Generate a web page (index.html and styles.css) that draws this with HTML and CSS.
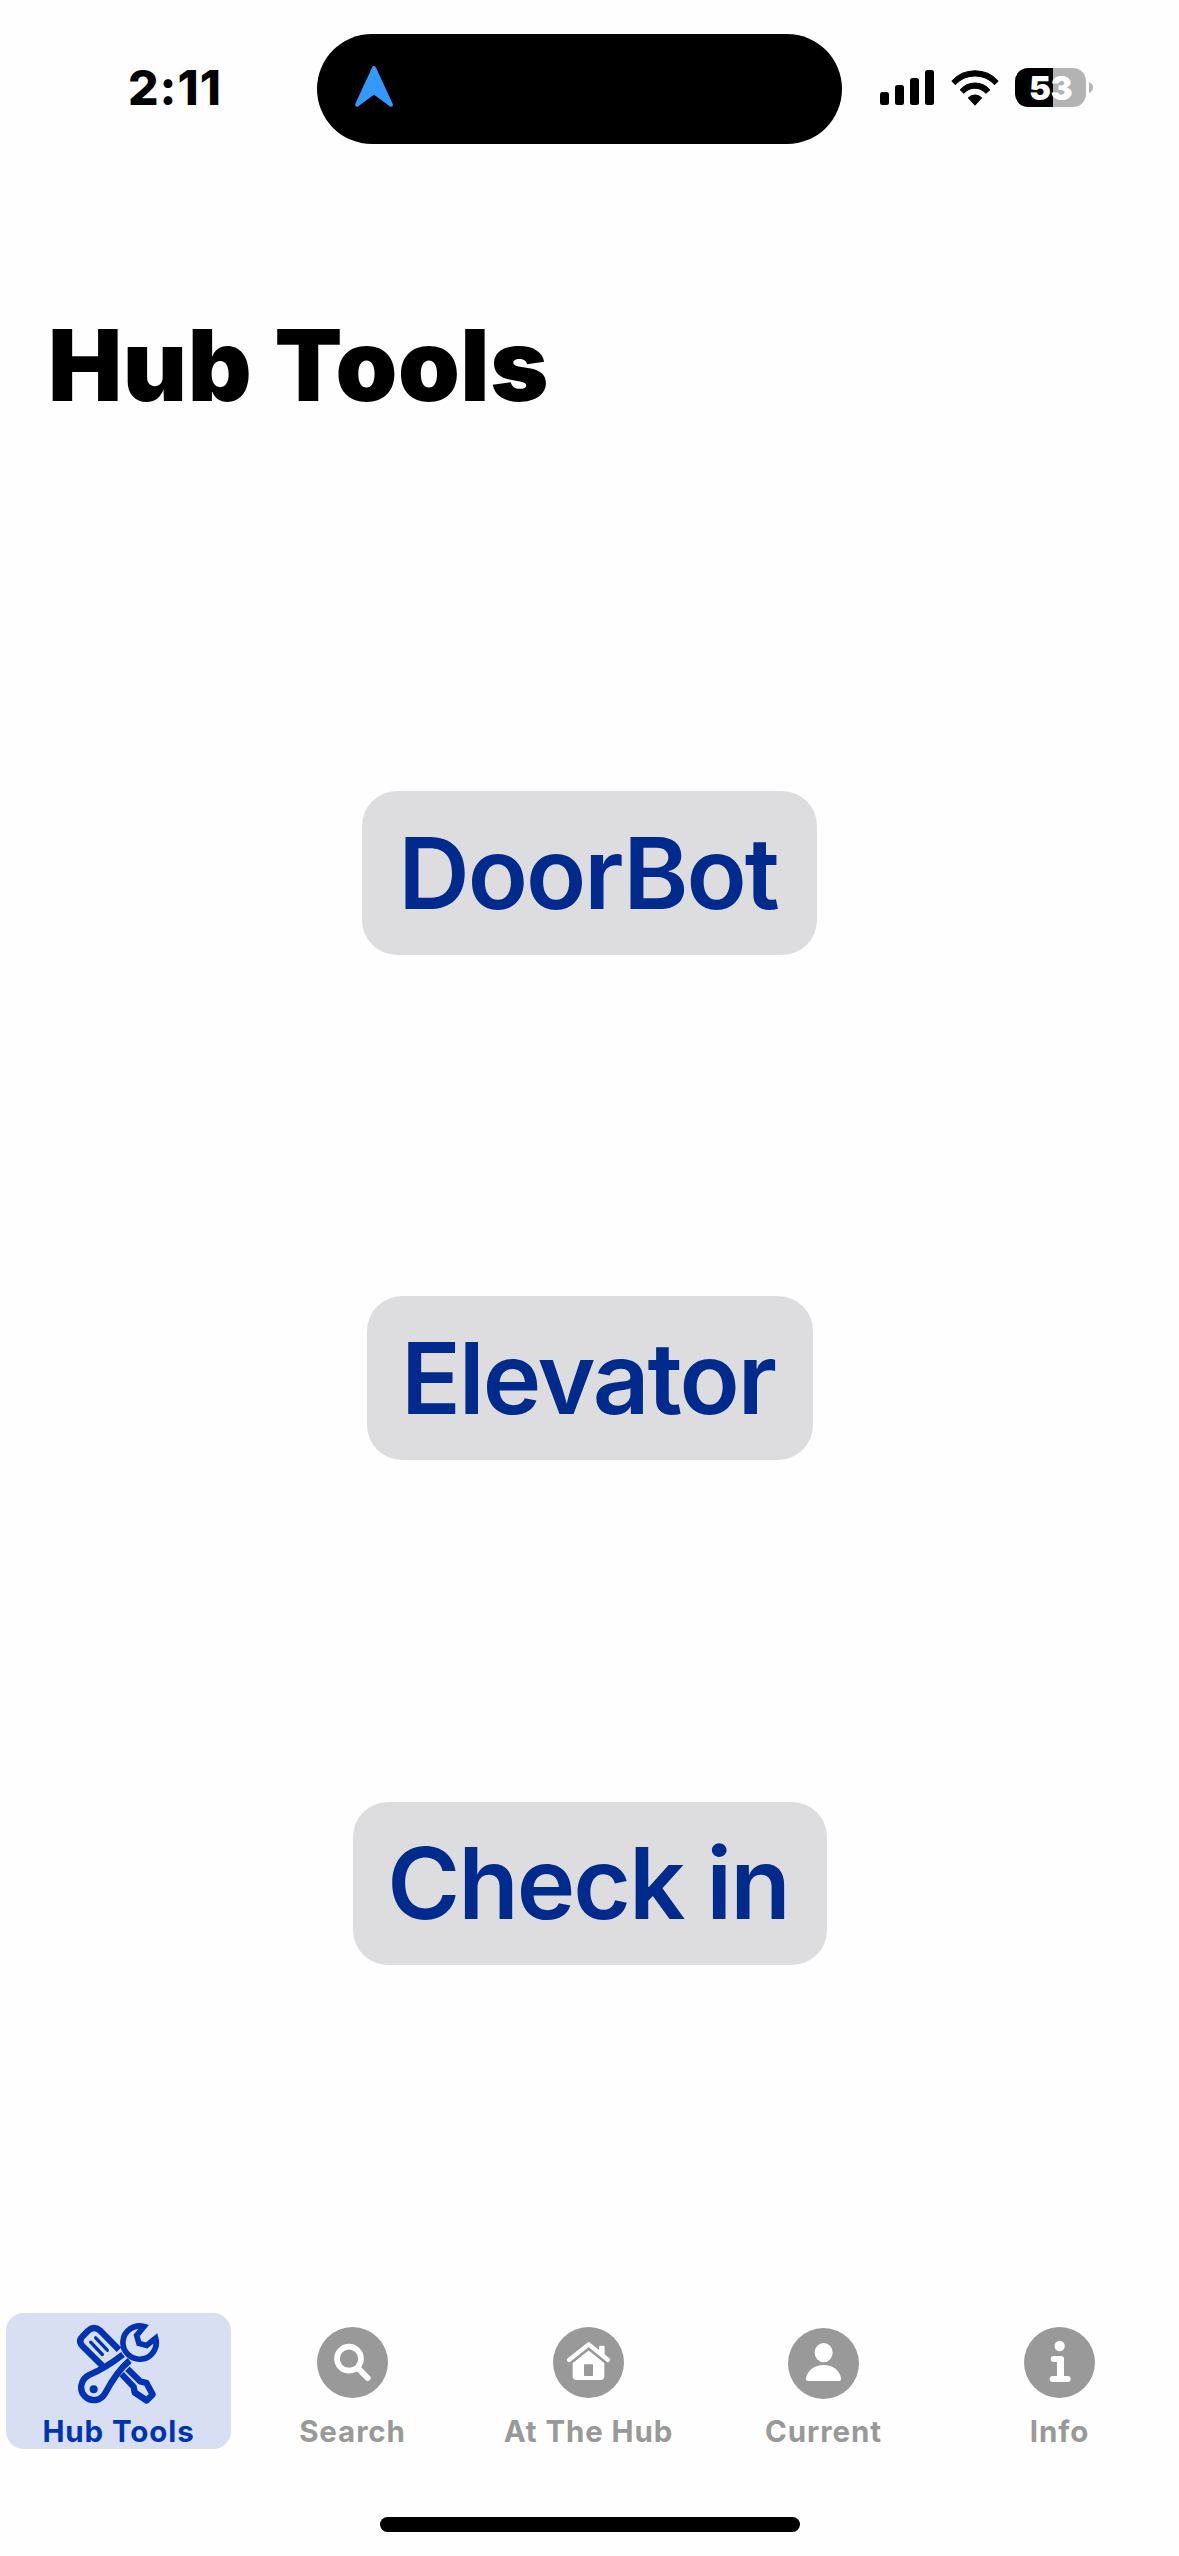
FILE: index.html
```html
<!DOCTYPE html>
<html lang="en">
<head>
<meta charset="utf-8">
<title>Hub Tools</title>
<link rel="stylesheet" href="styles.css">
</head>
<body>
<div class="screen">
  <header class="status">
    <span class="time">2:11</span>
    <div class="island">
      <svg class="nav-arrow" viewBox="0 0 114 124"><path d="M57 6 L108 117 L57 79 L6 117 Z" fill="#3399ff" stroke="#3399ff" stroke-width="12" stroke-linejoin="round"/></svg>
    </div>
    <svg class="signal" viewBox="0 0 54 35"><rect y="22" width="9" height="13" rx="2.5"/><rect x="15" y="15" width="9" height="20" rx="2.5"/><rect x="30" y="8" width="9" height="27" rx="2.5"/><rect x="45" width="9" height="35" rx="2.5"/></svg>
    <svg class="wifi" viewBox="512 149 143 107" stroke="#000" stroke-width="3" stroke-linejoin="round">
      <path d="M515 182A92 92 0 0 1 652 182L642 192A81 81 0 0 0 525 192Z"/>
      <path d="M540 208A57 57 0 0 1 627 208L616 218A44 44 0 0 0 550 218Z"/>
      <path d="M564 232A27 27 0 0 1 603 232L583.500 253Z"/>
    </svg>
    <div class="battery">53</div>
    <svg class="nub" viewBox="0 0 4 11"><path d="M0 0Q4 2 4 5.500T0 11Z" fill="#b3b3b3"/></svg>
  </header>

  <h1 class="title">Hub Tools</h1>

  <main class="actions">
    <button class="action action-door">DoorBot</button>
    <button class="action action-elevator">Elevator</button>
    <button class="action action-check">Check in</button>
  </main>

  <nav class="tabs">
    <a class="tab tab-active">
      <svg class="tools" viewBox="228 66 252 248" fill="none" stroke="#0033b4" stroke-width="19" stroke-linejoin="round">
        <path d="M304 197L245 138Q230 123 245 108L262 91Q279 76 297 91L354 149"/>
        <path d="M269 126L304 163M284 113L319 150" stroke-width="10" stroke-linecap="round"/>
        <path d="M362 222L398 260L401 277L437 301L455 283L436 248L418 244L379 206"/>
        <path d="M366 163C340 183 300 210 265 224C238 237 233 271 252 289C271 307 300 302 312 280C327 252 350 210 386 181"/>
        <path d="M429 79L407 106L414 130L437 136L464 114A50 50 0 1 1 429 79Z" stroke-width="17" stroke-linejoin="miter" stroke-miterlimit="2"/>
        <circle cx="278" cy="267" r="12" fill="#0033b4" stroke="none"/>
      </svg>
      <span class="label">Hub Tools</span>
    </a>
    <a class="tab">
      <svg class="disc" viewBox="0 0 213 213"><circle cx="106.500" cy="106.500" r="106.500"/><circle cx="96" cy="95" r="36" stroke="#fff" stroke-width="17"/><path d="M124 125L152 153" stroke="#fff" stroke-width="18" stroke-linecap="round"/></svg>
      <span class="label">Search</span>
    </a>
    <a class="tab">
      <svg class="disc" viewBox="0 0 213 213"><circle cx="106.500" cy="106.500" r="106.500"/><path d="M138 80V60Q138 56 142 56H151Q155 56 155 60V90Z" fill="#fff"/><path d="M48 99L107 52L165 99" fill="none" stroke="#fff" stroke-width="13" stroke-linecap="round" stroke-linejoin="round"/><path d="M107 70L154 108V148Q154 159 143 159H70Q59 159 59 148V108Z" fill="#fff"/><path d="M57 106L107 66L157 106" fill="none" stroke="#999" stroke-width="5"/><rect x="93" y="112" width="27" height="35" rx="2"/></svg>
      <span class="label">At The Hub</span>
    </a>
    <a class="tab">
      <svg class="disc disc-low" viewBox="0 0 213 213"><circle cx="106.500" cy="106.500" r="106.500"/><ellipse cx="107" cy="74" rx="27" ry="29" fill="#fff"/><path d="M60 159Q53 159 54 151C59 126 80 111 107 111S155 126 159 151Q160 159 153 159Z" fill="#fff"/></svg>
      <span class="label">Current</span>
    </a>
    <a class="tab">
      <svg class="disc" viewBox="0 0 213 213"><circle cx="106.500" cy="106.500" r="106.500"/><circle cx="107" cy="57" r="15.500" fill="#fff"/><path d="M89 87H112Q120 87 120 95V147H131A9 9 0 0 1 131 165H86A9 9 0 0 1 86 147H99V105H89A9 9 0 0 1 89 87Z" fill="#fff"/></svg>
      <span class="label">Info</span>
    </a>
  </nav>
  <div class="home-bar"></div>
</div>
</body>
</html>
```
FILE: styles.css
```css
* { box-sizing: border-box; }
body { margin: 0; background: #fefefe; font-family: Inter, "Liberation Sans", sans-serif; }
.screen { width: 1179px; height: 2556px; overflow: hidden; display: flex; flex-direction: column; }

.status { height: 144px; padding-top: 34px; display: flex; align-items: flex-start; }
.time { width: 189px; margin: 25px 0 0 128px; font-size: 48px; line-height: 57px; font-weight: 800; letter-spacing: 1px; white-space: nowrap; }
.island { width: 525px; height: 110px; border-radius: 55px; background: #000; padding: 32px 0 0 38px; }
.nav-arrow { display: block; width: 38px; height: 41px; }
.signal { width: 54px; height: 35px; margin: 36px 0 0 38px; }
.wifi { width: 48px; height: 36px; margin: 35.500px 0 0 17px; }
.battery { width: 71px; height: 39px; margin: 34px 0 0 16px; border-radius: 13px; background: linear-gradient(90deg, #000 38px, #b3b3b3 38px); color: #fff; font-size: 33px; line-height: 40px; font-weight: 900; letter-spacing: -0.500px; text-align: center; }
.nub { width: 4px; height: 11px; margin: 48px 0 0 3px; }

.title { margin: 161px 0 0 48px; font-size: 99px; line-height: 120px; font-weight: 900; letter-spacing: 0.600px; word-spacing: 2px; color: #000; white-space: nowrap; }

.actions { flex: 1; display: flex; flex-direction: column; align-items: center; gap: 341px; padding-top: 366px; }
.action { height: 164px; border: 0; padding: 0 3px 0 0; border-radius: 35px; background: #dddde0; color: #002a8c; font-family: inherit; font-size: 99px; line-height: 164px; font-weight: 600; letter-spacing: -2px; white-space: nowrap; }
.action-door { width: 455px; }
.action-elevator { width: 446px; }
.action-check { width: 474px; height: 163px; margin-top: 1px; line-height: 163px; }

.tabs { display: grid; grid-template-columns: 235px 235px 237px 233px 239px; height: 135px; }
.tab { display: flex; flex-direction: column; align-items: center; color: #999; }
.tab-active { margin: 0 4px 1px 6px; border-radius: 18px; background: #d9dff2; color: #0033b4; }
.tools { width: 84px; height: 83px; margin: 9px 0 8px; }
.disc { width: 71px; height: 71px; margin: 14px 0 15px; fill: #999; }
.disc-low { margin: 15px 0 14px; }
.label { font-size: 29.500px; line-height: 36px; font-weight: 700; letter-spacing: 0.900px; white-space: nowrap; }
.home-bar { width: 420px; height: 15px; margin: 69px auto 24px; border-radius: 8px; background: #000; }
```
